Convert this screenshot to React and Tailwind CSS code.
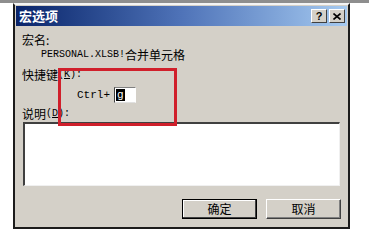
export default function App() {
  const cjk = { fontFamily: '"Noto Sans CJK SC", "Liberation Sans", sans-serif' };
  const mono = { fontFamily: '"Liberation Mono", "Noto Sans CJK SC", monospace' };
  return (
    <div className="relative w-[369px] h-[241px] bg-white overflow-hidden text-black" style={cjk}>
      <div className="h-[3px] bg-[#8e8e8e]" />
      <div className="ml-[13px] w-[337px] h-[226px] bg-[#d4d0c8] border-t-2 border-t-[#f4f4f4] border-l-2 border-l-[#1c1c1c] border-r-2 border-r-[#1c1c1c] border-b-2 border-b-[#1c1c1c] flex flex-col">
        <div className="mx-[1px] mt-[1px] h-[20px] flex items-center justify-between bg-gradient-to-r from-[#0a246a] via-[#4f73b8] to-[#a6caf0] pl-[3px] pr-[2px]">
          <span className="text-white font-bold text-[13px] leading-[14px]">宏选项</span>
          <div className="flex gap-[2px]">
            <div className="w-[16px] h-[14px] bg-[#d4d0c8] border-t border-l border-t-white border-l-white border-r border-b border-r-[#404040] border-b-[#404040] flex items-center justify-center text-[11px] font-bold leading-none" style={{ fontFamily: '"Liberation Sans", sans-serif' }}>?</div>
            <div className="w-[16px] h-[14px] bg-[#d4d0c8] border-t border-l border-t-white border-l-white border-r border-b border-r-[#404040] border-b-[#404040] flex items-center justify-center">
              <svg width="8" height="7" viewBox="0 0 8 7"><path d="M0.5 0.5 L7.5 6.5 M7.5 0.5 L0.5 6.5" stroke="#000" strokeWidth="1.6" /></svg>
            </div>
          </div>
        </div>
        <div className="mt-[7px] pl-[7px] text-[12px] leading-[14px]">宏名:</div>
        <div className="mt-[1px] pl-[26px] h-[14px] flex items-center text-[12px] leading-[14px]">
          <span className="text-[10px]" style={mono}>PERSONAL.XLSB!</span>
          <span>合并单元格</span>
        </div>
        <div className="mt-[6px] pl-[7px] h-[14px] flex items-center text-[12px] leading-[14px]">
          <span>快捷键</span>
          <span className="text-[10px]" style={mono}>(<span className="underline">K</span>):</span>
        </div>
        <div className="mt-[5px] pl-[62px] h-[16px] flex items-center">
          <span className="text-[11px] mr-[4px]" style={mono}>Ctrl+</span>
          <div className="w-[22px] h-[16px] bg-white border-t border-l border-t-[#808080] border-l-[#404040] border-r border-b border-r-white border-b-[#e0e0e0] flex items-center pl-[1px]">
            <span className="bg-black text-white text-[11px] leading-[12px] px-[1px]" style={mono}>g</span>
          </div>
        </div>
        <div className="mt-[4px] pl-[7px] h-[14px] flex items-center text-[12px] leading-[14px]">
          <span>说明</span>
          <span className="text-[10px]" style={mono}>(<span className="underline">D</span>):</span>
        </div>
        <div className="mt-[1px] ml-[8px] w-[317px] h-[64px] bg-white border-t-2 border-l-2 border-t-[#404040] border-l-[#404040] border-r border-b border-r-[#f0f0f0] border-b-[#f0f0f0]" />
        <div className="mt-[13px] flex justify-end gap-[9px] pr-[7px]">
          <div className="w-[75px] h-[20px] bg-[#d4d0c8] border border-black flex items-center justify-center text-[12px] shadow-[inset_-1px_-1px_0_#404040,inset_1px_1px_0_#ffffff]">确定</div>
          <div className="w-[75px] h-[20px] bg-[#d4d0c8] border-t border-l border-t-white border-l-white border-r border-b border-r-[#404040] border-b-[#404040] flex items-center justify-center text-[12px] shadow-[inset_-1px_-1px_0_#808080]">取消</div>
        </div>
      </div>
      <div className="absolute left-[58px] top-[68px] w-[119px] h-[58px] border-[3px] border-[#d01f2b]" />
    </div>
  );
}
